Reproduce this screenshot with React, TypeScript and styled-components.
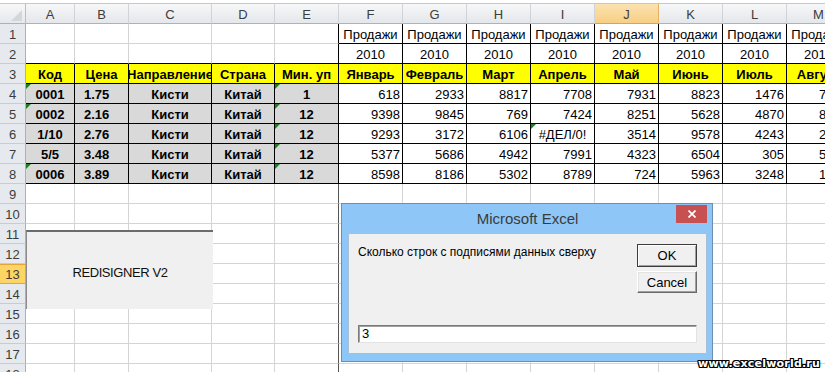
import React from "react";
import styled, { createGlobalStyle } from "styled-components";

const GlobalStyle = createGlobalStyle`
  html, body {
    margin: 0;
    padding: 0;
    background: #ffffff;
    overflow: hidden;
  }
  body {
    font-family: "Liberation Sans", Arial, sans-serif;
  }
`;

const COLS = ["A", "B", "C", "D", "E", "F", "G", "H", "I", "J", "K", "L", "M"];
const WIDTHS = [49, 54, 83, 63, 64, 64, 64, 64, 64, 64, 64, 64, 64];
const ROW_COUNT = 18;
const ACTIVE_COL = "J";
const ACTIVE_ROW = 13;

const months = ["Январь", "Февраль", "Март", "Апрель", "Май", "Июнь", "Июль", "Август"];
const codes = ["0001", "0002", "1/10", "5/5", "0006"];
const prices = ["1.75", "2.16", "2.76", "3.48", "3.89"];
const minPack = ["1", "12", "12", "12", "12"];
const sales: (number | string)[][] = [
  [618, 2933, 8817, 7708, 7931, 8823, 1476, 7215],
  [9398, 9845, 769, 7424, 8251, 5628, 4870, 8364],
  [9293, 3172, 6106, "#ДЕЛ/0!", 3514, 9578, 4243, 2590],
  [5377, 5686, 4942, 7991, 4323, 6504, 305, 5147],
  [8598, 8186, 5302, 8789, 724, 5963, 3248, 1932],
];
// cells with the green "number stored as text" marker
const marked = ["A4", "A5", "A8", "E4", "E5", "E6", "E7", "E8", "I6"];

type Align = "left" | "center" | "right";
interface CellData {
  text: string;
  align: Align;
  bold: boolean;
  indent: number;
}

const Sheet = styled.div`
  position: relative;
  width: 825px;
  height: 372px;
  overflow: hidden;
  box-sizing: border-box;
  padding-top: 3px;
  background: #ffffff;
`;

const Grid = styled.div`
  display: grid;
  grid-template-columns: 26px ${WIDTHS.map((w) => `${w}px`).join(" ")};
  grid-template-rows: 21px repeat(${ROW_COUNT}, 20px);
`;

const Corner = styled.div`
  position: relative;
  box-sizing: border-box;
  border-top: 1px solid #c5c9ce;
  border-right: 1px solid #b9bec5;
  border-bottom: 1px solid #abb2bb;
  background: linear-gradient(#f6f7f8, #e6e9ec);
  &::after {
    content: "";
    position: absolute;
    right: 3px;
    bottom: 2px;
    border-left: 11px solid transparent;
    border-bottom: 11px solid #d3d6da;
  }
`;

const ColHead = styled.div<{ $active: boolean }>`
  box-sizing: border-box;
  display: flex;
  align-items: center;
  justify-content: center;
  padding-top: 1px;
  border-top: 1px solid #c5c9ce;
  border-right: 1px solid ${(p) => (p.$active ? "#e5b262" : "#d0d4d9")};
  border-bottom: 1px solid ${(p) => (p.$active ? "#f29b37" : "#abb2bb")};
  background: ${(p) =>
    p.$active
      ? "linear-gradient(#fbe2b0, #f7cf84)"
      : "linear-gradient(#f6f7f8, #e4e7eb)"};
  color: #3c3c3c;
  font-size: 13px;
`;

const RowHead = styled.div<{ $active: boolean }>`
  box-sizing: border-box;
  display: flex;
  align-items: flex-end;
  justify-content: center;
  line-height: 16px;
  border-right: 1px solid ${(p) => (p.$active ? "#e9a23a" : "#a9b0b9")};
  border-bottom: 1px solid ${(p) => (p.$active ? "#e9a23a" : "#c7ccd2")};
  box-shadow: ${(p) => (p.$active ? "inset 0 1px #e9a23a" : "none")};
  background: ${(p) => (p.$active ? "#fdd564" : "#e6e9ed")};
  color: #3c3c3c;
  font-size: 13px;
`;

const Cell = styled.div<{
  $align: Align;
  $bold: boolean;
  $fill: string;
  $right: string;
  $bottom: string;
  $indent: number;
  $mark: boolean;
}>`
  position: relative;
  box-sizing: border-box;
  display: flex;
  align-items: flex-end;
  justify-content: ${(p) =>
    p.$align === "left" ? "flex-start" : p.$align === "right" ? "flex-end" : "center"};
  padding: 0 2px 0 ${(p) => 2 + p.$indent}px;
  border-right: 1px solid ${(p) => p.$right};
  border-bottom: 1px solid ${(p) => p.$bottom};
  background: ${(p) => p.$fill};
  color: #000000;
  font-size: 13px;
  line-height: 16px;
  font-weight: ${(p) => (p.$bold ? 700 : 400)};
  white-space: nowrap;
  overflow: hidden;
  &::before {
    content: "";
    display: ${(p) => (p.$mark ? "block" : "none")};
    position: absolute;
    top: 0;
    left: 0;
    border-top: 5px solid #1f7f1f;
    border-right: 5px solid transparent;
  }
`;

const FormButton = styled.div`
  position: absolute;
  left: 26px;
  top: 230px;
  width: 187px;
  height: 79px;
  box-sizing: border-box;
  border-top: 2px solid #6b6b6b;
  border-left: 1px solid #8c8c8c;
  background: #f0f0f0;
  display: flex;
  align-items: center;
  justify-content: center;
  padding-top: 4px;
  color: #0f0f0f;
  font-size: 13px;
  letter-spacing: -0.4px;
`;

const Dialog = styled.div`
  position: absolute;
  left: 341px;
  top: 203px;
  width: 372px;
  height: 159px;
  box-sizing: border-box;
  border: 1px solid #6d8db2;
  background: #8ec7f7;
  display: flex;
  flex-direction: column;
  padding: 0 5px 7px 6px;
`;

const TitleBar = styled.div`
  height: 29px;
  flex-shrink: 0;
  display: grid;
  grid-template-columns: 1fr auto 1fr;
  align-items: start;
`;

const Title = styled.div`
  grid-column: 2;
  line-height: 29px;
  font-size: 15px;
  color: #3a3a3a;
`;

const CloseButton = styled.div`
  grid-column: 3;
  justify-self: end;
  margin-top: 1px;
  width: 31px;
  height: 18px;
  background: #c75050;
  display: flex;
  align-items: center;
  justify-content: center;
`;

const Client = styled.div`
  flex: 1;
  box-sizing: border-box;
  border: 1px solid #a6c0da;
  background: #f0f0f0;
  display: flex;
  flex-direction: column;
  padding: 10px 9px;
`;

const TopRow = styled.div`
  display: flex;
  justify-content: space-between;
  align-items: flex-start;
`;

const Prompt = styled.div`
  margin-top: 1px;
  font-size: 12px;
  line-height: 14px;
  color: #000000;
`;

const Buttons = styled.div`
  display: flex;
  flex-direction: column;
  gap: 4px;
`;

const DlgButton = styled.div<{ $default?: boolean; $h: number }>`
  width: 60px;
  height: ${(p) => p.$h}px;
  box-sizing: border-box;
  display: flex;
  align-items: center;
  justify-content: center;
  border: 1px solid;
  border-color: ${(p) =>
    p.$default ? "#3c3c3c" : "#ffffff #6a6a6a #6a6a6a #ffffff"};
  box-shadow: ${(p) =>
    p.$default
      ? "inset 1px 1px #ffffff, inset -1px -1px #a0a0a0"
      : "inset -1px -1px #a0a0a0, inset 1px 1px #e3e3e3"};
  background: #f0f0f0;
  font-size: 13px;
  color: #000000;
`;

const Input = styled.div`
  margin-top: auto;
  height: 18px;
  box-sizing: border-box;
  border: 1px solid;
  border-color: #7a7a7a #e3e3e3 #e3e3e3 #7a7a7a;
  box-shadow: inset 1px 1px #a0a0a0;
  background: #ffffff;
  padding-left: 3px;
  font-size: 13px;
  line-height: 16px;
  color: #000000;
`;

const Watermark = styled.div`
  position: absolute;
  right: 5px;
  bottom: 2px;
  font-family: "DejaVu Sans", Verdana, sans-serif;
  font-weight: 700;
  font-size: 11px;
  letter-spacing: 0.2px;
  color: #ffffff;
  text-shadow: 1px 0 #000, -1px 0 #000, 0 1px #000, 0 -1px #000, 1px 1px #000,
    -1px -1px #000, 1px -1px #000, -1px 1px #000;
`;

const boxed = (r: number, ci: number) =>
  (r >= 1 && r <= 2 && ci >= 5 && ci <= 12) || (r >= 3 && r <= 8 && ci <= 12);

const cellData = (r: number, ci: number): CellData => {
  const plain = (text: string, align: Align, bold = false, indent = 0) => ({
    text,
    align,
    bold,
    indent,
  });
  if (r === 1 && ci >= 5) return plain("Продажи", "center");
  if (r === 2 && ci >= 5) return plain("2010", "center");
  if (r === 3) {
    const heads = ["Код", "Цена", "Направление", "Страна", "Мин. уп"];
    return plain(ci < 5 ? heads[ci] : months[ci - 5], "center", true);
  }
  if (r >= 4 && r <= 8) {
    const i = r - 4;
    if (ci === 0) return plain(codes[i], "center", true);
    if (ci === 1) return plain(prices[i], "left", true, 7);
    if (ci === 2) return plain("Кисти", "center", true);
    if (ci === 3) return plain("Китай", "center", true);
    if (ci === 4) return plain(minPack[i], "center", true);
    const v = sales[i][ci - 5];
    return plain(String(v), typeof v === "string" ? "center" : "right");
  }
  return plain("", "left");
};

const fillOf = (r: number, ci: number) => {
  if (r === 3) return "#ffff00";
  if (r >= 4 && r <= 8 && ci <= 4) return "#d9d9d9";
  return "#ffffff";
};

const App = () => {
  const rows = Array.from({ length: ROW_COUNT }, (_, i) => i + 1);
  return (
    <>
      <GlobalStyle />
      <Sheet>
        <Grid>
          <Corner />
          {COLS.map((c) => (
            <ColHead key={c} $active={c === ACTIVE_COL}>
              {c}
            </ColHead>
          ))}
          {rows.map((r) => (
            <React.Fragment key={r}>
              <RowHead $active={r === ACTIVE_ROW}>{r}</RowHead>
              {COLS.map((c, ci) => {
                const d = cellData(r, ci);
                const right =
                  boxed(r, ci) || boxed(r, ci + 1)
                    ? "#000000"
                    : ci === 4
                    ? "#555555"
                    : "#d4d4d4";
                const bottom =
                  boxed(r, ci) || boxed(r + 1, ci) ? "#000000" : "#d4d4d4";
                return (
                  <Cell
                    key={c}
                    $align={d.align}
                    $bold={d.bold}
                    $indent={d.indent}
                    $fill={fillOf(r, ci)}
                    $right={right}
                    $bottom={bottom}
                    $mark={marked.includes(`${c}${r}`)}
                  >
                    {d.text}
                  </Cell>
                );
              })}
            </React.Fragment>
          ))}
        </Grid>

        <FormButton>REDISIGNER V2</FormButton>

        <Dialog>
          <TitleBar>
            <Title>Microsoft Excel</Title>
            <CloseButton>
              <svg width="8" height="8" viewBox="0 0 8 8">
                <path d="M0.5 0.5 L7.5 7.5 M7.5 0.5 L0.5 7.5" stroke="#ffffff" strokeWidth="1.7" />
              </svg>
            </CloseButton>
          </TitleBar>
          <Client>
            <TopRow>
              <Prompt>Сколько строк с подписями данных сверху</Prompt>
              <Buttons>
                <DlgButton $default $h={23}>OK</DlgButton>
                <DlgButton $h={22}>Cancel</DlgButton>
              </Buttons>
            </TopRow>
            <Input>3</Input>
          </Client>
        </Dialog>

        <Watermark>www.excelworld.ru</Watermark>
      </Sheet>
    </>
  );
};

export default App;
